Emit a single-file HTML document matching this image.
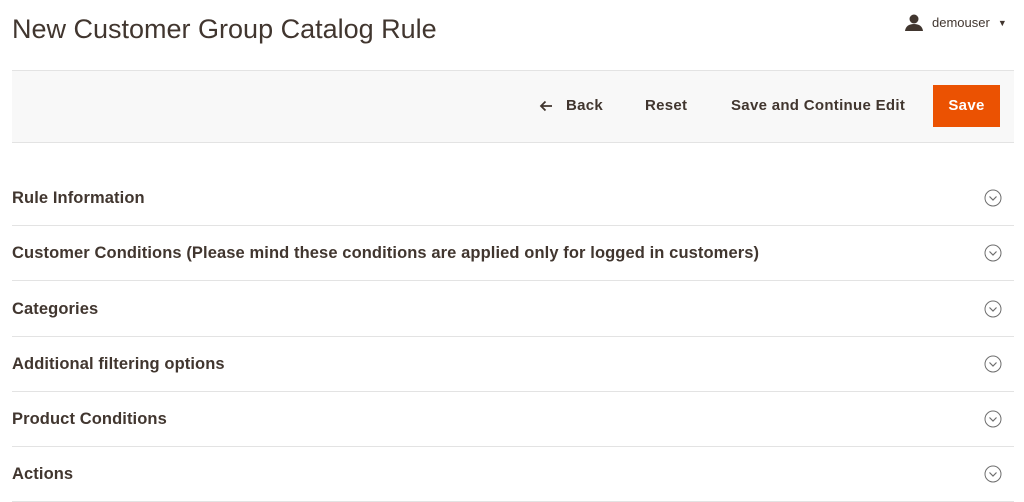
<!DOCTYPE html>
<html><head><meta charset="utf-8"><style>
body{margin:0;width:1024px;height:502px;background:#fff;font-family:"Liberation Sans",sans-serif;color:#303030;overflow:hidden;position:relative}
h1{position:absolute;left:12px;top:12px;margin:0;font-weight:normal;font-size:27px;color:#41362f;line-height:34px}
.user{position:absolute;left:905px;top:14px;font-size:13px;color:#41362f;display:flex;align-items:center}
.bar{position:absolute;left:12px;top:70px;width:1002px;height:71px;background:#f8f8f8;border-top:1px solid #e3e3e3;border-bottom:1px solid #e3e3e3}
.btn{position:absolute;top:97px;font-size:15px;color:#41362f;font-weight:bold;line-height:18px;letter-spacing:0.3px}
.save{position:absolute;left:933px;top:85px;width:67px;height:42px;background:#eb5202;color:#fff;font-weight:bold;font-size:15px;text-align:center;line-height:42px;letter-spacing:0.3px}
.row{position:absolute;left:12px;width:1002px;height:55px;border-bottom:1px solid #e3e3e3}
.row span{position:absolute;left:0;top:18px;font-size:16.5px;letter-spacing:0.1px;font-weight:bold;color:#41362f;line-height:20px;white-space:nowrap}
.row svg{position:absolute;right:12px;top:19px}
</style></head><body>
<h1>New Customer Group Catalog Rule</h1>
<div class="user"><svg width="18" height="17" viewBox="0 0 18 17"><circle cx="9" cy="5" r="4.5" fill="#41362f"/><path d="M0 17 Q1 10 9 10 Q17 10 18 17Z" fill="#41362f"/></svg><span style="margin-left:9px">demouser</span><span style="margin-left:8px;font-size:9px">▼</span></div>
<div class="bar"></div>
<svg style="position:absolute;left:539px;top:100px" width="14" height="12" viewBox="0 0 14 12"><path d="M13 6H2M6.5 1.5L2 6l4.5 4.5" fill="none" stroke="#41362f" stroke-width="1.8"/></svg>
<div class="btn" style="left:566px">Back</div>
<div class="btn" style="left:645px">Reset</div>
<div class="btn" style="left:731px">Save and Continue Edit</div>
<div class="save">Save</div>
<div class="row" style="top:170px"><span>Rule Information</span><svg width="18" height="18"><circle cx="9" cy="9" r="8" fill="none" stroke="#6d6d6d" stroke-width="1"/><path d="M5.5 7.5 L9 11 L12.5 7.5" fill="none" stroke="#6d6d6d" stroke-width="1.2"/></svg></div>
<div class="row" style="top:225px"><span>Customer Conditions (Please mind these conditions are applied only for logged in customers)</span><svg width="18" height="18"><circle cx="9" cy="9" r="8" fill="none" stroke="#6d6d6d" stroke-width="1"/><path d="M5.5 7.5 L9 11 L12.5 7.5" fill="none" stroke="#6d6d6d" stroke-width="1.2"/></svg></div>
<div class="row" style="top:281px"><span>Categories</span><svg width="18" height="18"><circle cx="9" cy="9" r="8" fill="none" stroke="#6d6d6d" stroke-width="1"/><path d="M5.5 7.5 L9 11 L12.5 7.5" fill="none" stroke="#6d6d6d" stroke-width="1.2"/></svg></div>
<div class="row" style="top:336px"><span>Additional filtering options</span><svg width="18" height="18"><circle cx="9" cy="9" r="8" fill="none" stroke="#6d6d6d" stroke-width="1"/><path d="M5.5 7.5 L9 11 L12.5 7.5" fill="none" stroke="#6d6d6d" stroke-width="1.2"/></svg></div>
<div class="row" style="top:391px"><span>Product Conditions</span><svg width="18" height="18"><circle cx="9" cy="9" r="8" fill="none" stroke="#6d6d6d" stroke-width="1"/><path d="M5.5 7.5 L9 11 L12.5 7.5" fill="none" stroke="#6d6d6d" stroke-width="1.2"/></svg></div>
<div class="row" style="top:446px"><span>Actions</span><svg width="18" height="18"><circle cx="9" cy="9" r="8" fill="none" stroke="#6d6d6d" stroke-width="1"/><path d="M5.5 7.5 L9 11 L12.5 7.5" fill="none" stroke="#6d6d6d" stroke-width="1.2"/></svg></div>
</body></html>
